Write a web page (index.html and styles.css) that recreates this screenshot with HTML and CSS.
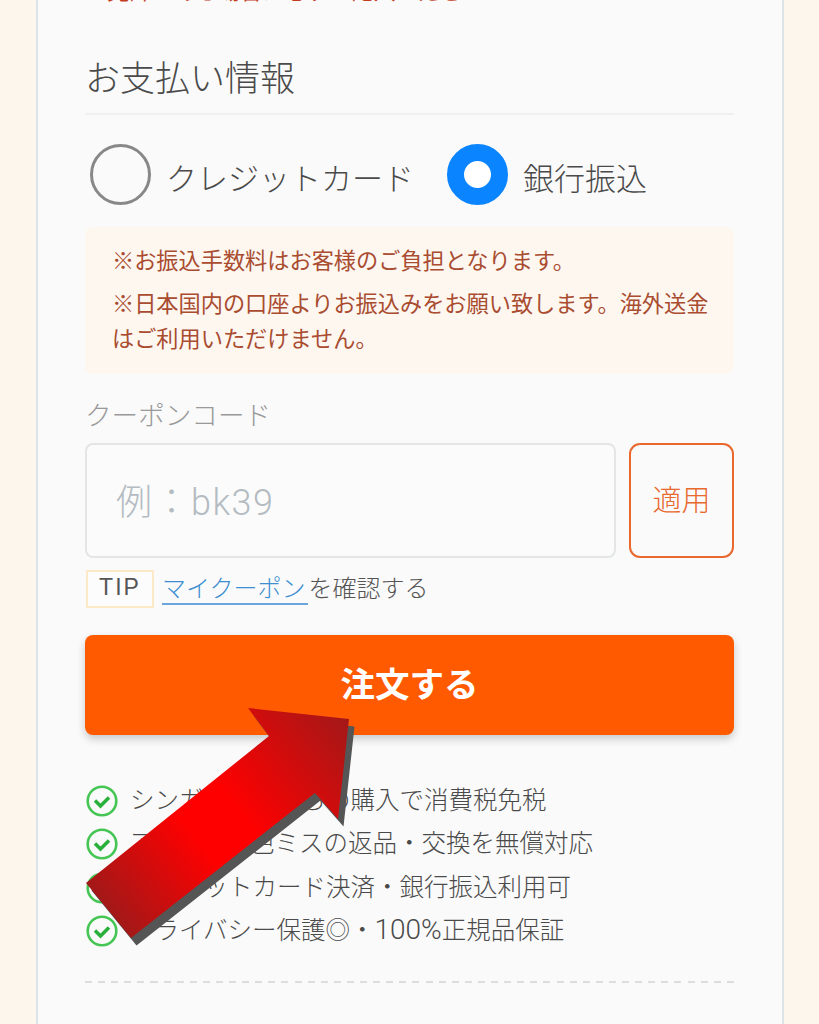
FILE: index.html
```html
<!DOCTYPE html>
<html lang="ja">
<head>
    <meta charset="UTF-8">
    <meta name="viewport" content="width=device-width, initial-scale=1.0">
    <title>お支払い情報</title>
    <link rel="stylesheet" href="styles.css">
</head>
<body>

    <div class="page">
        <div class="card">
            <p class="top-note">※免許がある場合は必ずご記入ください！</p>

            <!-- Payment section -->
            <h2 class="section-title">お支払い情報</h2>
            <div class="pay-options">
                <div class="pay-option">
                    <span class="radio"></span>
                    <span class="pay-label">クレジットカード</span>
                </div>
                <div class="pay-option">
                    <span class="radio radio-on"></span>
                    <span class="pay-label">銀行振込</span>
                </div>
            </div>

            <div class="notice">
                <p>※お振込手数料はお客様のご負担となります。</p>
                <p>※日本国内の口座よりお振込みをお願い致します。海外送金はご利用いただけません。</p>
            </div>

            <!-- Coupon section -->
            <div class="coupon-label">クーポンコード</div>
            <div class="coupon-row">
                <input class="coupon-input" type="text" placeholder="例：bk39">
                <button class="apply-btn">適用</button>
            </div>
            <div class="tip-row">
                <span class="tip-tag">TIP</span>
                <a class="tip-link" href="#">マイクーポン</a>
                <span class="tip-text">を確認する</span>
            </div>

            <button class="order-btn">注文する</button>

            <!-- Benefits -->
            <ul class="benefits">
                <li>
                    <svg class="check" viewBox="0 0 32 32"><circle cx="16" cy="16" r="14.300" /><path d="M9 15.500l5.500 5.500 8.500-8.500" /></svg>
                    <span class="benefit-text">シンガポールからの購入で消費税免税</span>
                </li>
                <li>
                    <svg class="check" viewBox="0 0 32 32"><circle cx="16" cy="16" r="14.300" /><path d="M9 15.500l5.500 5.500 8.500-8.500" /></svg>
                    <span class="benefit-text">アイテム・色ミスの返品・交換を無償対応</span>
                </li>
                <li>
                    <svg class="check" viewBox="0 0 32 32"><circle cx="16" cy="16" r="14.300" /><path d="M9 15.500l5.500 5.500 8.500-8.500" /></svg>
                    <span class="benefit-text">クレジットカード決済・銀行振込利用可</span>
                </li>
                <li>
                    <svg class="check" viewBox="0 0 32 32"><circle cx="16" cy="16" r="14.300" /><path d="M9 15.500l5.500 5.500 8.500-8.500" /></svg>
                    <span class="benefit-text">プライバシー保護◎・<span class="latin">100%</span>正規品保証</span>
                </li>
            </ul>

            <div class="dashed"></div>
        </div>

        <!-- Red arrow drawn over the screenshot -->
        <svg class="arrow" viewBox="80 700 285 250">
            <defs>
                <linearGradient id="arrowFill" gradientUnits="userSpaceOnUse" x1="95" y1="915" x2="360" y2="705">
                    <stop offset="0" stop-color="#981b1b" />
                    <stop offset="0.38" stop-color="#ff0000" />
                    <stop offset="0.52" stop-color="#ff0000" />
                    <stop offset="1" stop-color="#981b1b" />
                </linearGradient>
            </defs>
            <polygon fill="#555555" points="253.500,715.500 354.500,726.500 343.500,826.500 320.500,800.500 136.500,945.500 91.500,890.500 274.500,743.500" />
            <polygon fill="url(#arrowFill)" points="248,708 349,719 338,819 315,793 131,938 86,883 269,736" />
        </svg>
    </div>

</body>
</html>
```

FILE: styles.css
```css
* {
    box-sizing: border-box;
}
body {
    margin: 0;
    padding: 0;
    background-color: #fdf6ec;
    font-family: "Noto Sans CJK JP", "Noto Sans", sans-serif;
    font-weight: 300;
    color: #4a4a4a;
}
p {
    margin: 0;
}
.page {
    position: relative;
    height: 1024px;
    overflow: hidden;
}
.card {
    width: 748px;
    height: 1100px;
    margin-left: 36px;
    padding: 0 48px 0 47px;
    background-color: #fafafa;
    border-left: 2px solid #dde4e8;
    border-right: 2px solid #dde4e8;
}
.top-note {
    margin: -26px 0 0;
    font-size: 22.200px;
    font-weight: 400;
    line-height: 30px;
    color: #c23c1e;
}
.section-title {
    height: 111px;
    margin: 0;
    padding: 48px 0 0;
    font-size: 35px;
    font-weight: 300;
    line-height: 48px;
    border-bottom: 2px solid #f0f0f0;
}
.pay-options {
    display: flex;
    gap: 33px;
    height: 61px;
    margin: 29px 0 0 5px;
}
.pay-option {
    display: flex;
    align-items: center;
    gap: 15px;
    font-size: 31px;
}
.pay-label {
    padding-top: 4px;
    line-height: 57px;
}
.radio {
    width: 61px;
    height: 61px;
    border: 3.500px solid #888888;
    border-radius: 50%;
}
.radio-on {
    border: 17px solid #0a84ff;
    background-color: #ffffff;
}
.notice {
    height: 147px;
    margin-top: 22px;
    padding: 15px 18px 0 27px;
    font-size: 22.200px;
    font-weight: 400;
    line-height: 35px;
    color: #a94c30;
    background-color: #fdf7f0;
    border-radius: 8px;
}
.notice p + p {
    margin-top: 8px;
}
.coupon-label {
    margin: 21px 0 0;
    font-size: 26.600px;
    line-height: 38px;
    color: #999999;
}
.coupon-row {
    display: flex;
    gap: 13px;
    margin-top: 10px;
}
.coupon-input {
    width: 531px;
    height: 115px;
    padding: 5px 29px 0;
    font-family: Roboto, "Noto Sans CJK JP", sans-serif;
    font-size: 36px;
    font-weight: 300;
    letter-spacing: 1.500px;
    background-color: #fbfbfb;
    border: 2px solid #e3e5e6;
    border-radius: 8px;
    outline: none;
}
.coupon-input::placeholder {
    color: #b4bcc2;
    opacity: 1;
}
.apply-btn {
    width: 105px;
    height: 115px;
    padding: 0 0 6px;
    font-family: inherit;
    font-size: 29px;
    font-weight: 300;
    color: #e8682e;
    background-color: transparent;
    border: 2px solid #e8682e;
    border-radius: 11px;
}
.tip-row {
    display: flex;
    align-items: center;
    height: 38px;
    margin-top: 12px;
    font-size: 24px;
    color: #555555;
}
.tip-tag {
    width: 68px;
    height: 38px;
    margin-left: 1px;
    margin-right: 8px;
    font-family: "Liberation Sans", sans-serif;
    font-size: 23px;
    line-height: 31px;
    text-align: center;
    letter-spacing: 2px;
    background-color: #fcfcfc;
    border: 2px solid #fbe9c8;
}
.tip-link {
    align-self: flex-start;
    height: 35px;
    margin-right: 1px;
    padding: 0 2px 0 0;
    line-height: 33px;
    color: #3d8fd1;
    text-decoration: none;
    border-bottom: 2px solid #6aa6dc;
}
.tip-text {
    margin-bottom: 6px;
}
.order-btn {
    display: block;
    width: 100%;
    height: 100px;
    margin-top: 27px;
    padding: 0 0 6px;
    font-family: inherit;
    font-size: 34.500px;
    font-weight: 700;
    color: #ffffff;
    background-color: #ff5a00;
    border: none;
    border-radius: 8px;
    box-shadow: 0 4px 8px rgba(0, 0, 0, 0.2);
}
.benefits {
    margin: 44px 0 0;
    padding: 0 0 0 1px;
    list-style: none;
    font-size: 24.500px;
}
.benefits li {
    display: flex;
    align-items: center;
    gap: 12px;
    height: 43.500px;
}
.benefit-text {
    margin-bottom: 5px;
}
.latin {
    font-family: Roboto, sans-serif;
    font-size: 28px;
    font-weight: 300;
}
.check {
    flex: none;
    width: 32px;
    height: 32px;
    fill: none;
    stroke: #45c654;
    stroke-width: 2.600;
}
.check path {
    stroke: #28b03a;
    stroke-width: 3.500;
}
.dashed {
    height: 2px;
    margin-top: 28px;
    background-image: repeating-linear-gradient(90deg, #dddddd 0, #dddddd 7px, transparent 7px, transparent 13.100px);
}
.arrow {
    position: absolute;
    left: 80px;
    top: 700px;
    width: 285px;
    height: 250px;
}
```
